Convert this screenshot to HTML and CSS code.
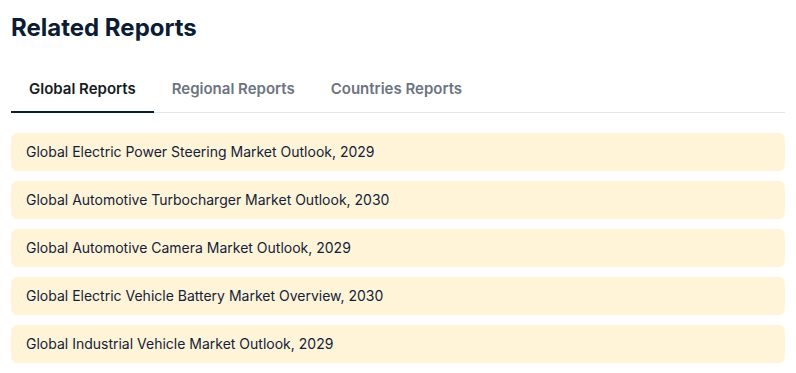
FILE: index.html
```html
<!DOCTYPE html>
<html lang="en">

<head>
  <meta charset="UTF-8" />
  <meta name="viewport" content="width=device-width, initial-scale=1.0" />
  <title>Related Reports</title>
  <link rel="stylesheet" href="styles.css">
</head>

<body>
  <section class="related">
    <h2 class="related-title">Related Reports</h2>

    <div class="tabs">
      <div class="tab active">Global Reports</div>
      <div class="tab">Regional Reports</div>
      <div class="tab">Countries Reports</div>
    </div>

    <ul class="report-list">
      <li class="report-item">Global Electric Power Steering Market Outlook, 2029</li>
      <li class="report-item">Global Automotive Turbocharger Market Outlook, 2030</li>
      <li class="report-item">Global Automotive Camera Market Outlook, 2029</li>
      <li class="report-item">Global Electric Vehicle Battery Market Overview, 2030</li>
      <li class="report-item">Global Industrial Vehicle Market Outlook, 2029</li>
    </ul>
  </section>
</body>

</html>
```

FILE: styles.css
```css
* {
  margin: 0;
  padding: 0;
  box-sizing: border-box;
  font-family: 'Inter', 'Noto Sans', sans-serif;
}

body {
  background: #ffffff;
  color: #0f1e33;
}

.related {
  padding: 13px 11px;
}

.related-title {
  font-size: 24px;
  line-height: 29px;
  font-weight: 700;
  color: #0b1d35;
}

.tabs {
  display: flex;
  margin-top: 22px;
  border-bottom: 1px solid #e3e5e8;
}

.tab {
  padding: 13px 18px 10px;
  margin-bottom: -1px;
  font-size: 15px;
  line-height: 24px;
  font-weight: 600;
  color: #6b7480;
  border-bottom: 2px solid transparent;
  cursor: pointer;
}

.tab.active {
  color: #161b22;
  border-bottom-color: #0b1d35;
}

.report-list {
  list-style: none;
  margin-top: 20px;
  display: flex;
  flex-direction: column;
  gap: 10px;
}

.report-item {
  background: #fff4d8;
  border-radius: 6px;
  padding: 0 15px;
  height: 38px;
  line-height: 38px;
  font-size: 14px;
  color: #13223a;
}
```
